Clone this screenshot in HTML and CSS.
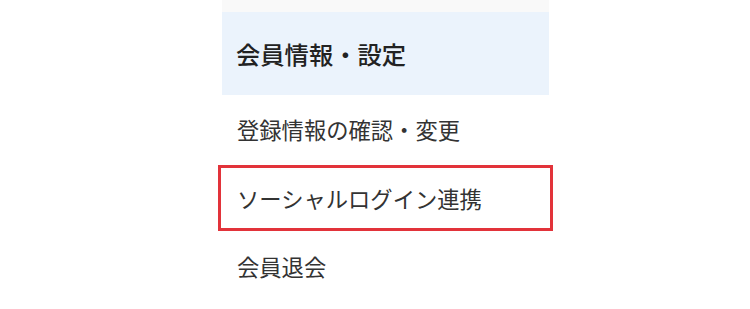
FILE: index.html
```html
<!DOCTYPE html>
<html lang="ja">
<head>
<meta charset="utf-8">
<link rel="stylesheet" href="styles.css">
</head>
<body>
<div class="col">
  <div class="strip"></div>
  <div class="head">会員情報・設定</div>
  <ul class="menu">
    <li class="row"><a class="link" href="#">登録情報の確認・変更</a></li>
    <li class="row"><a class="link focus" href="#">ソーシャルログイン連携</a></li>
    <li class="row"><a class="link" href="#">会員退会</a></li>
  </ul>
</div>
</body>
</html>
```
FILE: styles.css
```css
html, body {
  margin: 0;
  padding: 0;
  background: #ffffff;
}
body {
  font-family: "Noto Sans CJK JP", "Noto Sans", sans-serif;
  color: #333333;
}
.col {
  width: 327px;
  margin-left: 222px;
}
.strip {
  height: 12px;
  background: #f9f9f9;
}
.head {
  height: 83px;
  background: #ebf3fc;
  display: flex;
  align-items: center;
  padding-left: 14px;
  font-size: 24.3px;
  font-weight: 500;
  color: #222222;
}
.menu {
  list-style: none;
  margin: 0;
  padding: 0;
}
.row {
  padding: 5px 0 6px;
}
.row:last-child {
  padding-top: 4px;
}
.link {
  height: 58px;
  display: flex;
  align-items: center;
  padding-left: 15px;
  font-size: 22.3px;
  color: #333333;
  text-decoration: none;
}
.focus {
  outline: 3px solid #e2333a;
  outline-offset: 1px;
}
```
